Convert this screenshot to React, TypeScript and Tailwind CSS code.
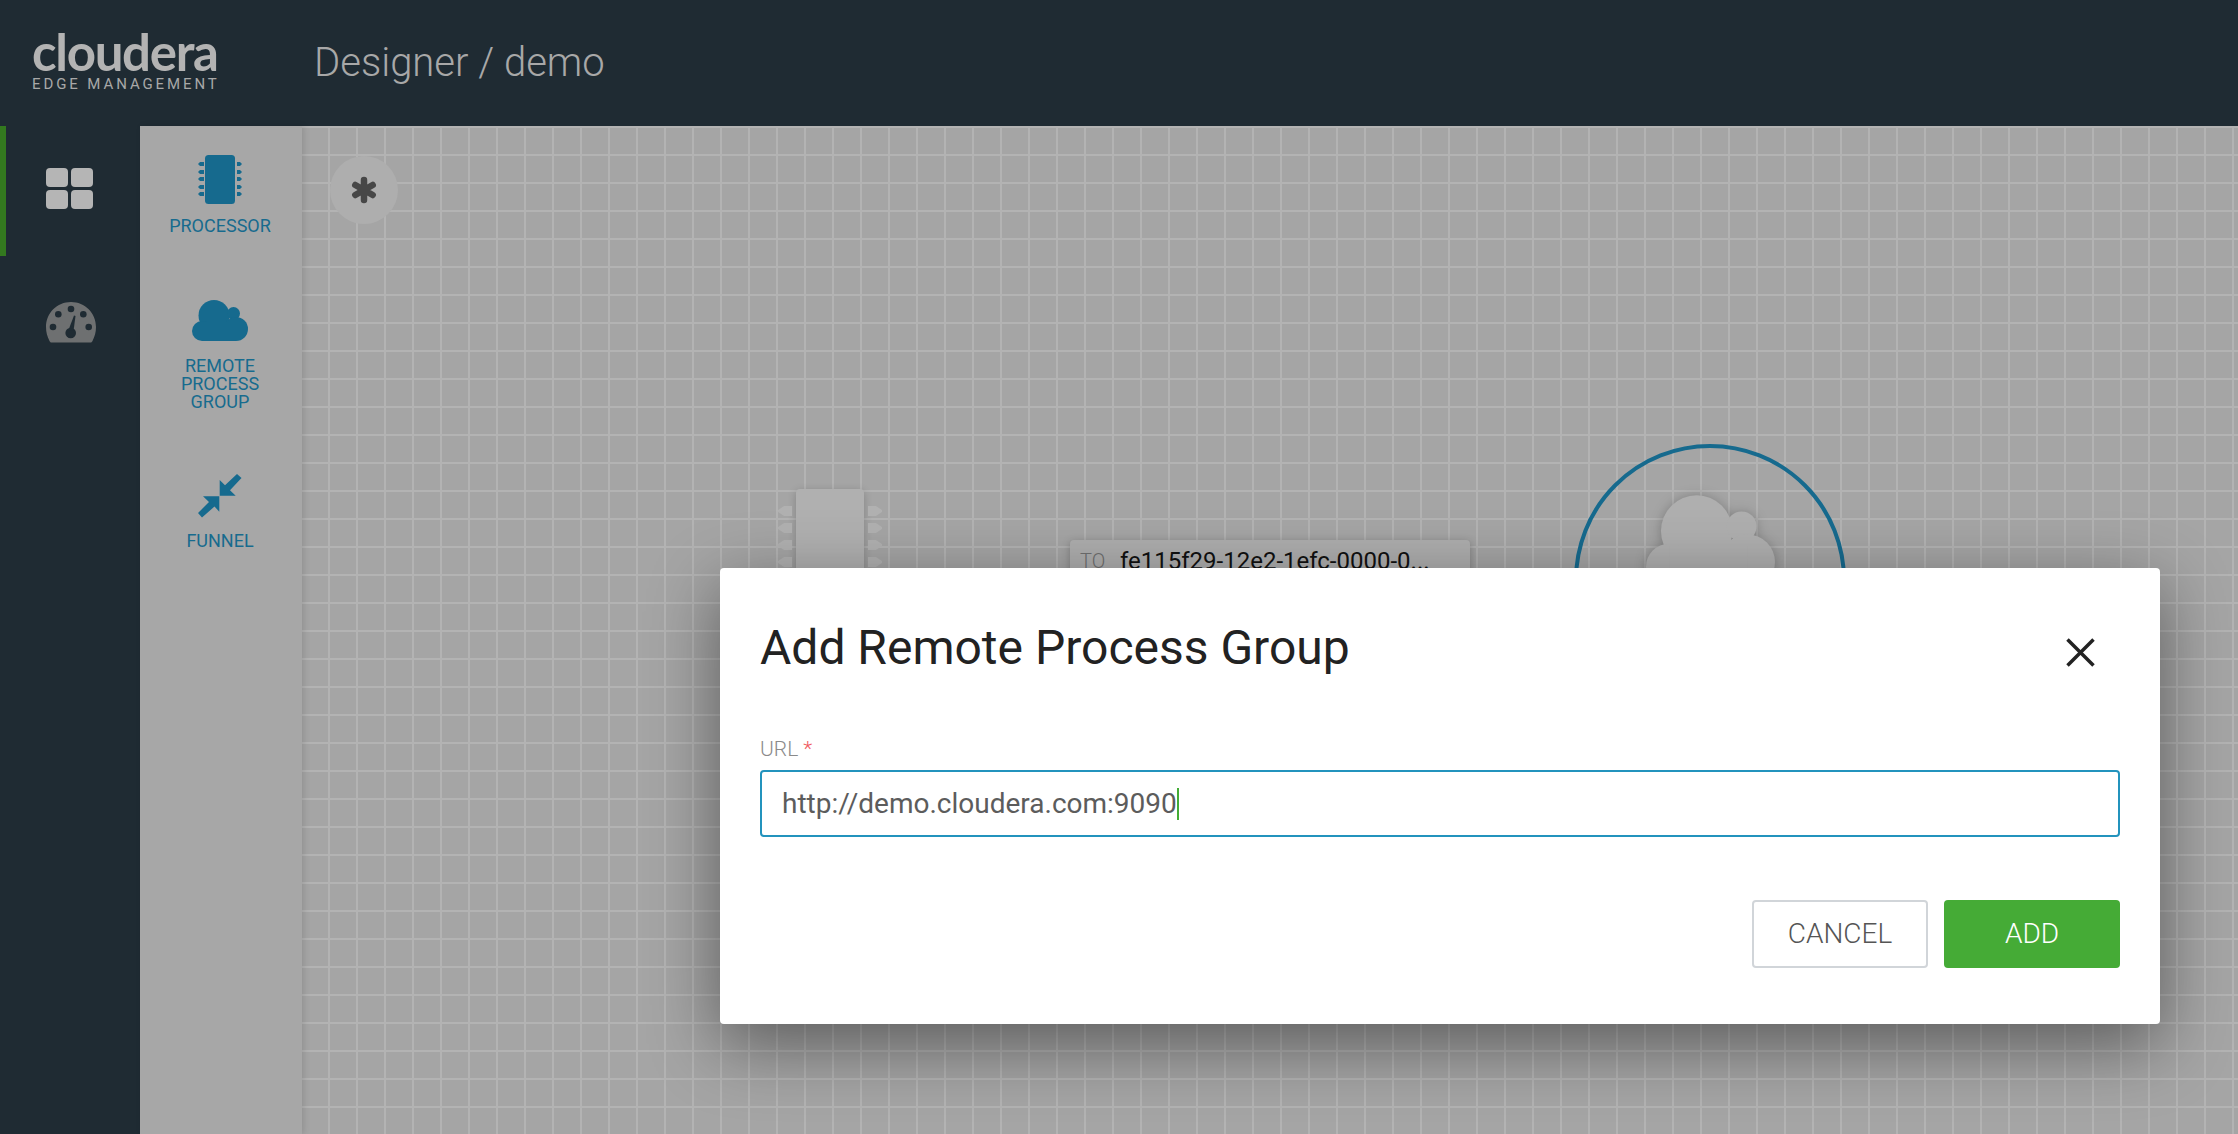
const blue = "#166a8e";

function GridIcon() {
  return (
    <div className="grid grid-cols-2 gap-[3px] w-[47px]">
      <div className="h-[19px] rounded-[4px] bg-[#b5b5b5]" />
      <div className="h-[19px] rounded-[4px] bg-[#b5b5b5]" />
      <div className="h-[19px] rounded-[4px] bg-[#b5b5b5]" />
      <div className="h-[19px] rounded-[4px] bg-[#b5b5b5]" />
    </div>
  );
}

function GaugeIcon() {
  return (
    <svg width="50" height="41" viewBox="0 0 50 41">
      <path
        fill="#6e7071"
        d="M25 0C11 0 0 11 0 25c0 5 1.200 9.500 3.500 14 .4.800 1 1.500 2 1.500h39c1 0 1.600-.7 2-1.500C48.800 34.500 50 30 50 25 50 11 39 0 25 0z"
      />
      <circle cx="25" cy="7" r="3.300" fill="#1f2b33" />
      <circle cx="12.300" cy="12.300" r="3.300" fill="#1f2b33" />
      <circle cx="37.300" cy="12.300" r="3.300" fill="#1f2b33" />
      <circle cx="7" cy="25" r="3.300" fill="#1f2b33" />
      <circle cx="42.700" cy="25" r="3.300" fill="#1f2b33" />
      <circle cx="24.700" cy="31" r="5.300" fill="#1f2b33" />
      <path d="M22.500 28 L28 13.500 L29.500 14 L27.500 29 Z" fill="#1f2b33" />
    </svg>
  );
}

function ChipIcon() {
  return (
    <svg width="44" height="49" viewBox="0 0 44 49">
      <rect x="7" y="0" width="30" height="49" rx="3.500" fill={blue} />
      {[9, 17, 24, 32, 39].map((y) => (
        <g key={y} fill={blue}>
          <path d={`M0 ${y} l2 -2 h4 v4 h-4z`} />
          <path d={`M39 ${y - 2} h3 l2 2 l-2 2 h-3z`} />
        </g>
      ))}
    </svg>
  );
}

function CloudIcon({ fill, className }: { fill: string; className?: string }) {
  return (
    <svg className={className} viewBox="0 0 56 41" fill={fill}>
      <circle cx="22" cy="15.500" r="15.500" />
      <circle cx="41.500" cy="13.500" r="6.500" />
      <circle cx="10" cy="31" r="10" />
      <circle cx="44" cy="29" r="12" />
      <path d="M10 22h34v19H10z" />
    </svg>
  );
}

function FunnelIcon() {
  return (
    <svg width="44" height="44" viewBox="0 0 44 44" fill={blue}>
      <path d="M21.700 6 L27 11.300 L39 0 L43.500 4 L32 16.300 L37.700 21.700 L21.700 21.700 Z" />
      <path d="M5 22.300 L21.300 22.300 L21.300 37.700 L16.500 32.500 L4 43.500 L0 39 L11 28 Z" />
    </svg>
  );
}

function Tool({ label, icon, gap }: { label: React.ReactNode; icon: React.ReactNode; gap: string }) {
  return (
    <div className="flex flex-col items-center">
      {icon}
      <div className={`text-center text-[18px] leading-[18px] text-[#176b8e] ${gap}`}>{label}</div>
    </div>
  );
}

function Pin({ flip }: { flip?: boolean }) {
  return (
    <svg width="14" height="10" viewBox="0 0 14 10" fill="#b1b1b1" className={flip ? "-scale-x-100" : ""}>
      <path d="M0 0h8l6 4v2l-6 4H0z" />
    </svg>
  );
}

export default function App() {
  return (
    <div
      className="flex h-screen w-full flex-col overflow-hidden bg-[#a6a6a6] text-[#222]"
      style={{ fontFamily: "Roboto, sans-serif" }}
    >
      <header className="flex h-[126px] shrink-0 items-center bg-[#1f2b33]">
        <div className="mb-[2px] ml-[32px] w-[186px]">
          <div className="font-['Lato',sans-serif] text-[51px] font-bold leading-[40px] tracking-[-1.300px] text-[#b3b3b3]">
            cloudera
          </div>
          <div className="mt-[4px] whitespace-nowrap text-[15px] leading-[16px] tracking-[2.900px] text-[#a8a8a8]">
            EDGE MANAGEMENT
          </div>
        </div>
        <div className="ml-[96px] text-[40px] font-light leading-none text-[#a8a8a8]">Designer / demo</div>
      </header>

      <div className="flex min-h-0 flex-1">
        <nav className="w-[140px] shrink-0 bg-[#1f2b33]">
          <div className="flex h-[130px] items-start border-l-[6px] border-[#33791f] pl-[40px] pt-[42px]">
            <GridIcon />
          </div>
          <div className="mt-[46px] pl-[46px]">
            <GaugeIcon />
          </div>
        </nav>

        <aside className="z-10 flex w-[162px] shrink-0 flex-col items-center bg-[#a7a7a7] pr-[2px] pt-[29px] shadow-[2px_0_6px_rgba(0,0,0,0.12)]">
          <Tool label="PROCESSOR" icon={<ChipIcon />} gap="mt-[13px]" />
          <div className="mt-[65px]">
            <Tool
              label={<>REMOTE<br />PROCESS<br />GROUP</>}
              icon={<CloudIcon fill={blue} className="h-[41px] w-[56px]" />}
              gap="mt-[16px]"
            />
          </div>
          <div className="mt-[63px]">
            <Tool label="FUNNEL" icon={<FunnelIcon />} gap="mt-[14px]" />
          </div>
        </aside>

        <main className="relative min-w-0 flex-1 overflow-hidden bg-[#a5a5a5] bg-[linear-gradient(#b3b3b3_2px,transparent_2px),linear-gradient(90deg,#b3b3b3_2px,transparent_2px)] bg-[size:28px_28px] bg-[position:26px_0px]">
          <button className="absolute left-[28px] top-[30px] flex h-[68px] w-[68px] items-center justify-center rounded-full bg-[#aeaeae]">
            <svg width="28" height="28" viewBox="0 0 28 28" stroke="#474747" strokeWidth="6.500" strokeLinecap="round">
              <path d="M14 4v20M5.300 9l17.400 10M22.700 9l-17.400 10" />
            </svg>
          </button>

          {/* processor node */}
          <div className="absolute left-[476px] top-[363px] flex gap-[4px]">
            <div className="flex flex-col gap-[7px] pt-[17px]">
              <Pin flip /><Pin flip /><Pin flip /><Pin flip />
            </div>
            <div className="h-[160px] w-[68px] rounded-[4px] bg-[#b0b0b0] shadow-[0_2px_8px_rgba(0,0,0,0.2)]" />
            <div className="flex flex-col gap-[7px] pt-[17px]">
              <Pin /><Pin /><Pin /><Pin />
            </div>
          </div>

          {/* connection label */}
          <div className="absolute left-[768px] top-[414px] flex h-[60px] w-[400px] items-start rounded-[4px] bg-[#aeaeae] pl-[10px] pt-[7px] shadow-[0_2px_8px_rgba(0,0,0,0.25)]">
            <span className="w-[40px] text-[20px] font-light leading-[28px] text-[#6f6f6f]">TO</span>
            <span className="text-[24px] leading-[28px] text-[#111]">fe115f29-12e2-1efc-0000-0...</span>
          </div>

          {/* remote process group node */}
          <div className="absolute left-[1272px] top-[318px] flex h-[272px] w-[272px] items-start justify-center rounded-full border-[4px] border-[#166a8e] pt-[47px]">
            <CloudIcon fill="#afafaf" className="h-[95px] w-[129px] drop-shadow-[0_1px_6px_rgba(0,0,0,0.25)]" />
          </div>
        </main>
      </div>

      {/* modal */}
      <div className="absolute left-[720px] top-[568px] flex h-[456px] w-[1440px] flex-col rounded-[4px] bg-white px-[40px] shadow-[0_20px_70px_rgba(0,0,0,0.45)]">
        <div className="flex items-start justify-between pt-[52px]">
          <h2 className="text-[48px] font-normal leading-[56px] text-[#222]">Add Remote Process Group</h2>
          <svg className="mr-[25px] mt-[18px]" width="29" height="29" viewBox="0 0 29 29" stroke="#222" strokeWidth="3.500">
            <path d="M1.500 1.500l26 26M27.500 1.500l-26 26" />
          </svg>
        </div>
        <label className="mt-[61px] text-[21px] font-light leading-[24px] text-[#8a8a8a]">
          URL <span className="text-[#ef5a60]">*</span>
        </label>
        <div className="mt-[9px] flex h-[67px] items-center rounded-[4px] border-2 border-[#2393bd] pl-[20px]">
          <span className="text-[28px] leading-none text-[#5c5c5c]">http://demo.cloudera.com:9090</span>
          <span className="h-[32px] w-[2px] bg-[#43ac36]" />
        </div>
        <div className="mt-[63px] flex justify-end gap-[16px]">
          <button className="h-[68px] w-[176px] rounded-[4px] border-2 border-[#d1d5d9] bg-white text-[28px] font-light text-[#555]">
            CANCEL
          </button>
          <button className="h-[68px] w-[176px] rounded-[4px] bg-[#45ab36] text-[28px] font-light text-white">
            ADD
          </button>
        </div>
      </div>
    </div>
  );
}
